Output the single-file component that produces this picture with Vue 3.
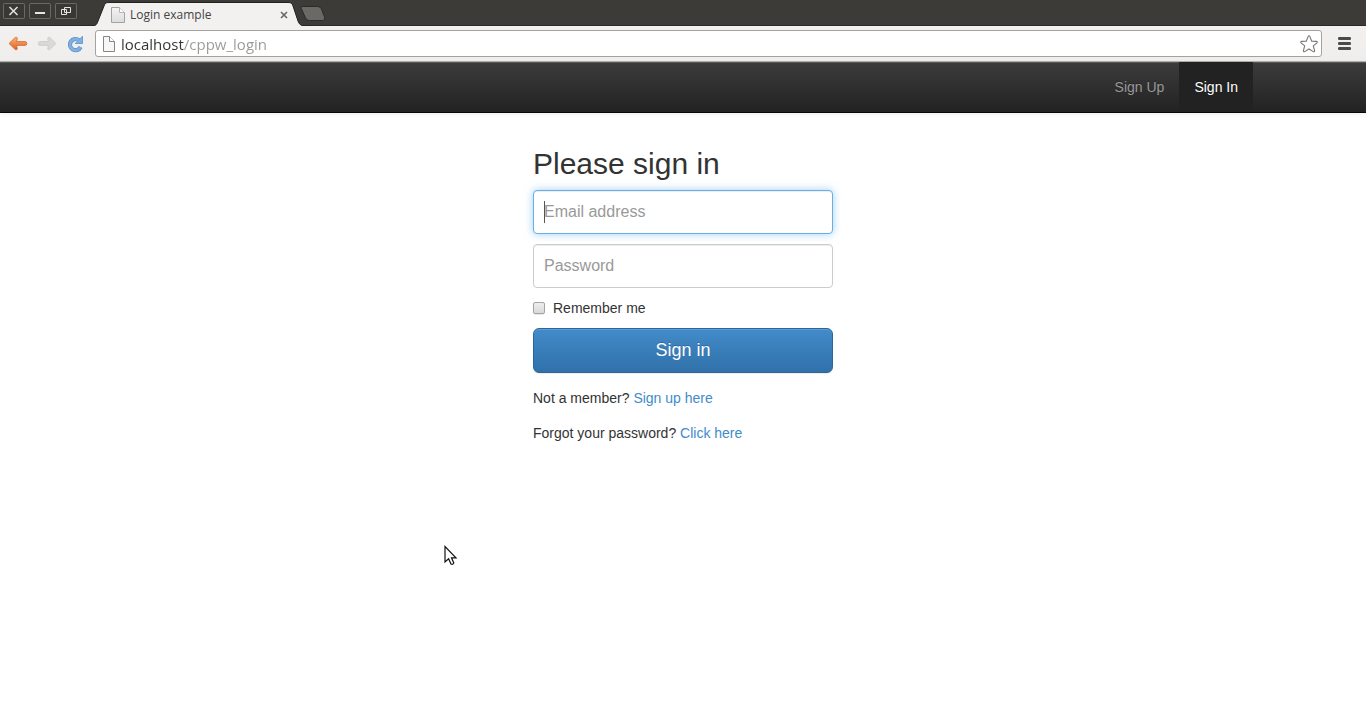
<script setup>
import { ref } from 'vue'

const address = ref('localhost/cppw_login')
const email = ref('')
const password = ref('')
const remember = ref(false)
</script>

<template>
  <div class="browser">
    <header class="titlebar">
      <div class="window-buttons">
        <button type="button" aria-label="Close window">
          <svg width="22" height="16" viewBox="0 0 22 16"><path d="M6.500 4l8 8M14.500 4l-8 8" stroke="#e6e4de" stroke-width="1.500" /></svg>
        </button>
        <button type="button" aria-label="Minimize window">
          <svg width="22" height="16" viewBox="0 0 22 16"><path d="M6 10h10" stroke="#e6e4de" stroke-width="2" /></svg>
        </button>
        <button type="button" aria-label="Restore window">
          <svg width="22" height="16" viewBox="0 0 22 16" fill="none" stroke="#e6e4de">
            <path d="M9.500 4.500h6v5h-6z" /><path d="M6.500 6.500h5v5h-5z" />
          </svg>
        </button>
      </div>
      <div class="tab">
        <svg class="tab-shape" width="214" height="24" viewBox="0 0 214 24">
          <path d="M0 24C4 24 5 22 6 19L12 4C13 1 14 .5 17 .5H196C199 .5 200 1 201 4L206 19C207 22 209 24 213 24Z" fill="#f2f1f0" />
          <path d="M0 24C4 24 5 22 6 19L12 4C13 1 14 .5 17 .5H196C199 .5 200 1 201 4L206 19C207 22 209 24 213 24" fill="none" stroke="#22211e" stroke-width="1" />
        </svg>
        <svg class="page-icon" width="14" height="16" viewBox="0 0 14 16">
          <defs><linearGradient id="page-fill" x1="0" y1="0" x2="0" y2="1"><stop offset="0" stop-color="#f4f4f4" /><stop offset="1" stop-color="#dcdcdc" /></linearGradient></defs>
          <path d="M.5.5h8l5 5v10H.5z" fill="url(#page-fill)" stroke="#a2a2a2" /><path d="M8.500.5v5h5" fill="#fff" stroke="#b4b4b4" />
        </svg>
        <span class="tab-title">Login example</span>
        <button type="button" class="tab-close" aria-label="Close tab">
          <svg width="8" height="8" viewBox="0 0 8 8"><path d="M1 1l6 6M7 1l-6 6" stroke="#666" stroke-width="1.600" /></svg>
        </button>
      </div>
      <button type="button" class="new-tab" aria-label="New tab">
        <svg width="27" height="16" viewBox="0 0 27 16">
          <path d="M2.500 .5H17.500Q20.500 .5 21.500 3L24.700 11.500Q25.500 14.500 22.500 14.500H9.500Q6.500 14.500 5.500 12L1.300 2.500Q.5 .5 2.500 .5Z" fill="#6b6965" stroke="#2b2a27" />
        </svg>
      </button>
    </header>

    <form class="toolbar" @submit.prevent>
      <button type="button" aria-label="Back">
        <svg width="20" height="16" viewBox="0 0 20 16">
          <defs><linearGradient id="back-fill" x1="0" y1="0" x2="0" y2="1"><stop offset="0" stop-color="#f9b27c" /><stop offset="1" stop-color="#e2611b" /></linearGradient></defs>
          <path d="M1 7.500L7.200 1.500C8.300 .7 9.600 1.500 9.300 2.800L8.500 5.600H17Q18.800 5.600 18.800 7.500T17 9.400H8.500L9.300 12.200C9.600 13.500 8.300 14.300 7.200 13.500Z" fill="url(#back-fill)" stroke="#cf6a34" stroke-width=".8" />
        </svg>
      </button>
      <button type="button" aria-label="Forward" disabled>
        <svg width="20" height="16" viewBox="0 0 20 16">
          <path d="M19 7.500L12.800 1.500C11.700 .7 10.400 1.500 10.700 2.800L11.500 5.600H3Q1.200 5.600 1.200 7.500T3 9.400H11.500L10.700 12.200C10.400 13.500 11.700 14.300 12.800 13.500Z" fill="#dad9d7" stroke="#cbcac8" stroke-width=".8" />
        </svg>
      </button>
      <button type="button" class="reload" aria-label="Reload">
        <svg width="18" height="18" viewBox="0 0 18 18">
          <path d="M13 5.200A5.600 5.600 0 1 0 14.600 12" fill="none" stroke="#5a90c6" stroke-width="4.200" />
          <path d="M16.500 1.200V8.500H9.200Z" fill="#7fb0df" stroke="#5a90c6" stroke-width=".8" stroke-linejoin="round" />
          <path d="M13 5.200A5.600 5.600 0 1 0 14.600 12" fill="none" stroke="#7fb0df" stroke-width="2.800" />
        </svg>
      </button>
      <div class="omnibox">
        <svg width="12" height="16" viewBox="0 0 12 16">
          <path d="M.5.5h6l5 5v10H.5z" fill="#f7f7f7" stroke="#858585" /><path d="M6.500.5v5h5" fill="#fff" stroke="#858585" />
        </svg>
        <input v-model="address" class="address" type="text" aria-label="Address" spellcheck="false" />
        <button type="button" class="star" aria-label="Bookmark this page">
          <svg width="20" height="20" viewBox="0 0 20 20">
            <path d="M10 1.800Q10.600 1.800 10.900 2.600L12.700 7.200L17.300 7.400Q18.900 7.700 17.900 8.900L14.300 11.900L15.600 16.500Q15.700 18.200 14.200 17.600L10 15L5.800 17.600Q4.300 18.200 4.400 16.500L5.700 11.900L2.100 8.900Q1.100 7.700 2.700 7.400L7.300 7.200L9.100 2.600Q9.400 1.800 10 1.800Z" fill="#fff" stroke="#777" stroke-width="1.100" />
          </svg>
        </button>
      </div>
      <button type="button" class="menu" aria-label="Menu">
        <svg width="13" height="13" viewBox="0 0 13 13" fill="#4a4a4a"><rect width="13" height="3" rx="1.200" /><rect y="5" width="13" height="3" rx="1.200" /><rect y="10" width="13" height="3" rx="1.200" /></svg>
      </button>
    </form>

    <nav class="navbar">
      <div class="nav-container">
        <a href="#signup">Sign Up</a>
        <a href="#signin" class="active">Sign In</a>
      </div>
    </nav>

    <main>
      <form class="signin" @submit.prevent>
        <h2>Please sign in</h2>
        <div class="field">
          <input v-model="email" class="control focused" type="email" placeholder="Email address" aria-label="Email address" />
          <span v-if="!email" class="caret"></span>
        </div>
        <div class="field">
          <input v-model="password" class="control" type="password" placeholder="Password" aria-label="Password" />
        </div>
        <label class="remember"><input v-model="remember" type="checkbox" />Remember me</label>
        <button type="submit" class="submit">Sign in</button>
        <p>Not a member? <a href="#signup">Sign up here</a></p>
        <p>Forgot your password? <a href="#reset">Click here</a></p>
      </form>
    </main>

    <svg class="pointer" width="14" height="22" viewBox="0 0 14 22">
      <path d="M1 1.500V17L4.600 13.700L7 19Q8.600 20 9.800 18L7.500 12.800H12Z" fill="#fff" stroke="#111" stroke-width="1.200" />
    </svg>
  </div>
</template>

<style>
body {
  background: #fff;
}
</style>

<style scoped>
.browser {
  position: relative;
  min-height: 100vh;
  font: 14px/20px "Liberation Sans", Arial, sans-serif;
  color: #333;
}
* {
  box-sizing: border-box;
}
svg {
  display: block;
  flex: none;
}
button {
  padding: 0;
  border: 0;
  background: none;
  font-family: inherit;
}
.titlebar {
  display: flex;
  align-items: flex-end;
  height: 26px;
  background: #3c3b37;
  border-bottom: 1px solid #2a2926;
}
.window-buttons {
  display: flex;
  align-self: flex-start;
  gap: 4px;
  padding: 3px 0 0 3px;
}
.window-buttons button {
  width: 22px;
  height: 16px;
  border-radius: 2px;
  background: #393834;
  box-shadow: inset 0 0 0 1px #6a6862;
}
.tab {
  position: relative;
  display: flex;
  align-items: center;
  width: 214px;
  height: 24px;
  margin: 0 -6px -1px 15px;
  padding: 2px 18px 0 19px;
}
.tab-shape {
  position: absolute;
  left: 0;
  top: 0;
}
.page-icon,
.tab-title,
.tab-close {
  position: relative;
}
.tab-title {
  flex: 1;
  padding-left: 5px;
  font: 12px/20px "Open Sans", "Noto Sans", sans-serif;
  color: #444;
}
.new-tab {
  align-self: flex-start;
  margin-top: 6px;
}
.toolbar {
  display: flex;
  align-items: center;
  height: 36px;
  padding: 0 15px 0 8px;
  background: linear-gradient(#f2f1f0, #efeeed);
  border-bottom: 1px solid #b0b0ae;
}
.toolbar button + button {
  margin-left: 9px;
}
.omnibox {
  display: flex;
  flex: 1;
  align-items: center;
  height: 27px;
  margin-left: 11px;
  padding: 0 2px 0 7px;
  background: #fff;
  border: 1px solid #a5a29e;
  border-radius: 3px;
}
.address {
  flex: 1;
  min-width: 0;
  height: 24px;
  padding: 0;
  margin: 0 6px;
  border: 0;
  outline: 0;
  font: 15px/24px "Open Sans", "Noto Sans", sans-serif;
  color: transparent;
  caret-color: #333;
  background: linear-gradient(90deg, #333 63px, #999 63px);
  -webkit-background-clip: text;
  background-clip: text;
}
.menu {
  margin-left: 16px;
}
.navbar {
  background: linear-gradient(#3c3c3c, #222);
  border-bottom: 1px solid #080808;
  box-shadow: inset 0 1px 0 rgba(255, 255, 255, 0.15), 0 1px 5px rgba(0, 0, 0, 0.075);
}
.nav-container {
  display: flex;
  justify-content: flex-end;
  max-width: 1170px;
  margin: 0 auto;
  padding: 0 15px;
}
.nav-container a {
  padding: 15px;
  color: #999;
  text-decoration: none;
  text-shadow: 0 -1px 0 rgba(0, 0, 0, 0.25);
}
.nav-container .active {
  color: #fff;
  background: #222;
}
.signin {
  max-width: 300px;
  margin: 0 auto;
  padding: 34px 0 40px;
}
h2 {
  margin: 0 0 10px;
  font-size: 30px;
  line-height: 33px;
  font-weight: 400;
}
.field {
  position: relative;
  margin-bottom: 10px;
}
.control {
  display: block;
  width: 100%;
  height: 44px;
  padding: 10px;
  border: 1px solid #ccc;
  border-radius: 4px;
  outline: 0;
  background: #fff;
  font: 16px/22px "Liberation Sans", Arial, sans-serif;
  color: #555;
  box-shadow: inset 0 1px 1px rgba(0, 0, 0, 0.075);
}
.control::placeholder {
  color: #999;
  opacity: 1;
}
.focused {
  border-color: #66afe9;
  box-shadow: inset 0 1px 1px rgba(0, 0, 0, 0.075), 0 0 8px rgba(102, 175, 233, 0.6);
}
.caret {
  position: absolute;
  left: 11px;
  top: 11px;
  width: 1px;
  height: 22px;
  background: #555;
}
.remember {
  display: flex;
  align-items: center;
  gap: 8px;
  margin-bottom: 10px;
}
.remember input {
  appearance: none;
  width: 12px;
  height: 12px;
  margin: 0;
  border: 1px solid #a4a4a4;
  border-radius: 2px;
  background: linear-gradient(#eee, #d9d9d9);
  box-shadow: 0 1px 1px rgba(0, 0, 0, 0.1);
}
.remember input:checked {
  background: #428bca;
}
.submit {
  display: block;
  width: 100%;
  height: 45px;
  margin-bottom: 15px;
  padding-bottom: 2px;
  border: 1px solid #2b669a;
  border-radius: 6px;
  background: linear-gradient(#428bca, #3071a9);
  box-shadow: inset 0 1px 0 rgba(255, 255, 255, 0.15), 0 1px 1px rgba(0, 0, 0, 0.075);
  color: #fff;
  font-size: 18px;
  line-height: 24px;
  text-shadow: 0 -1px 0 rgba(0, 0, 0, 0.2);
}
p {
  margin: 0 0 15px;
}
p a {
  color: #428bca;
  text-decoration: none;
}
.pointer {
  position: absolute;
  left: 444px;
  top: 545px;
  pointer-events: none;
}
</style>
